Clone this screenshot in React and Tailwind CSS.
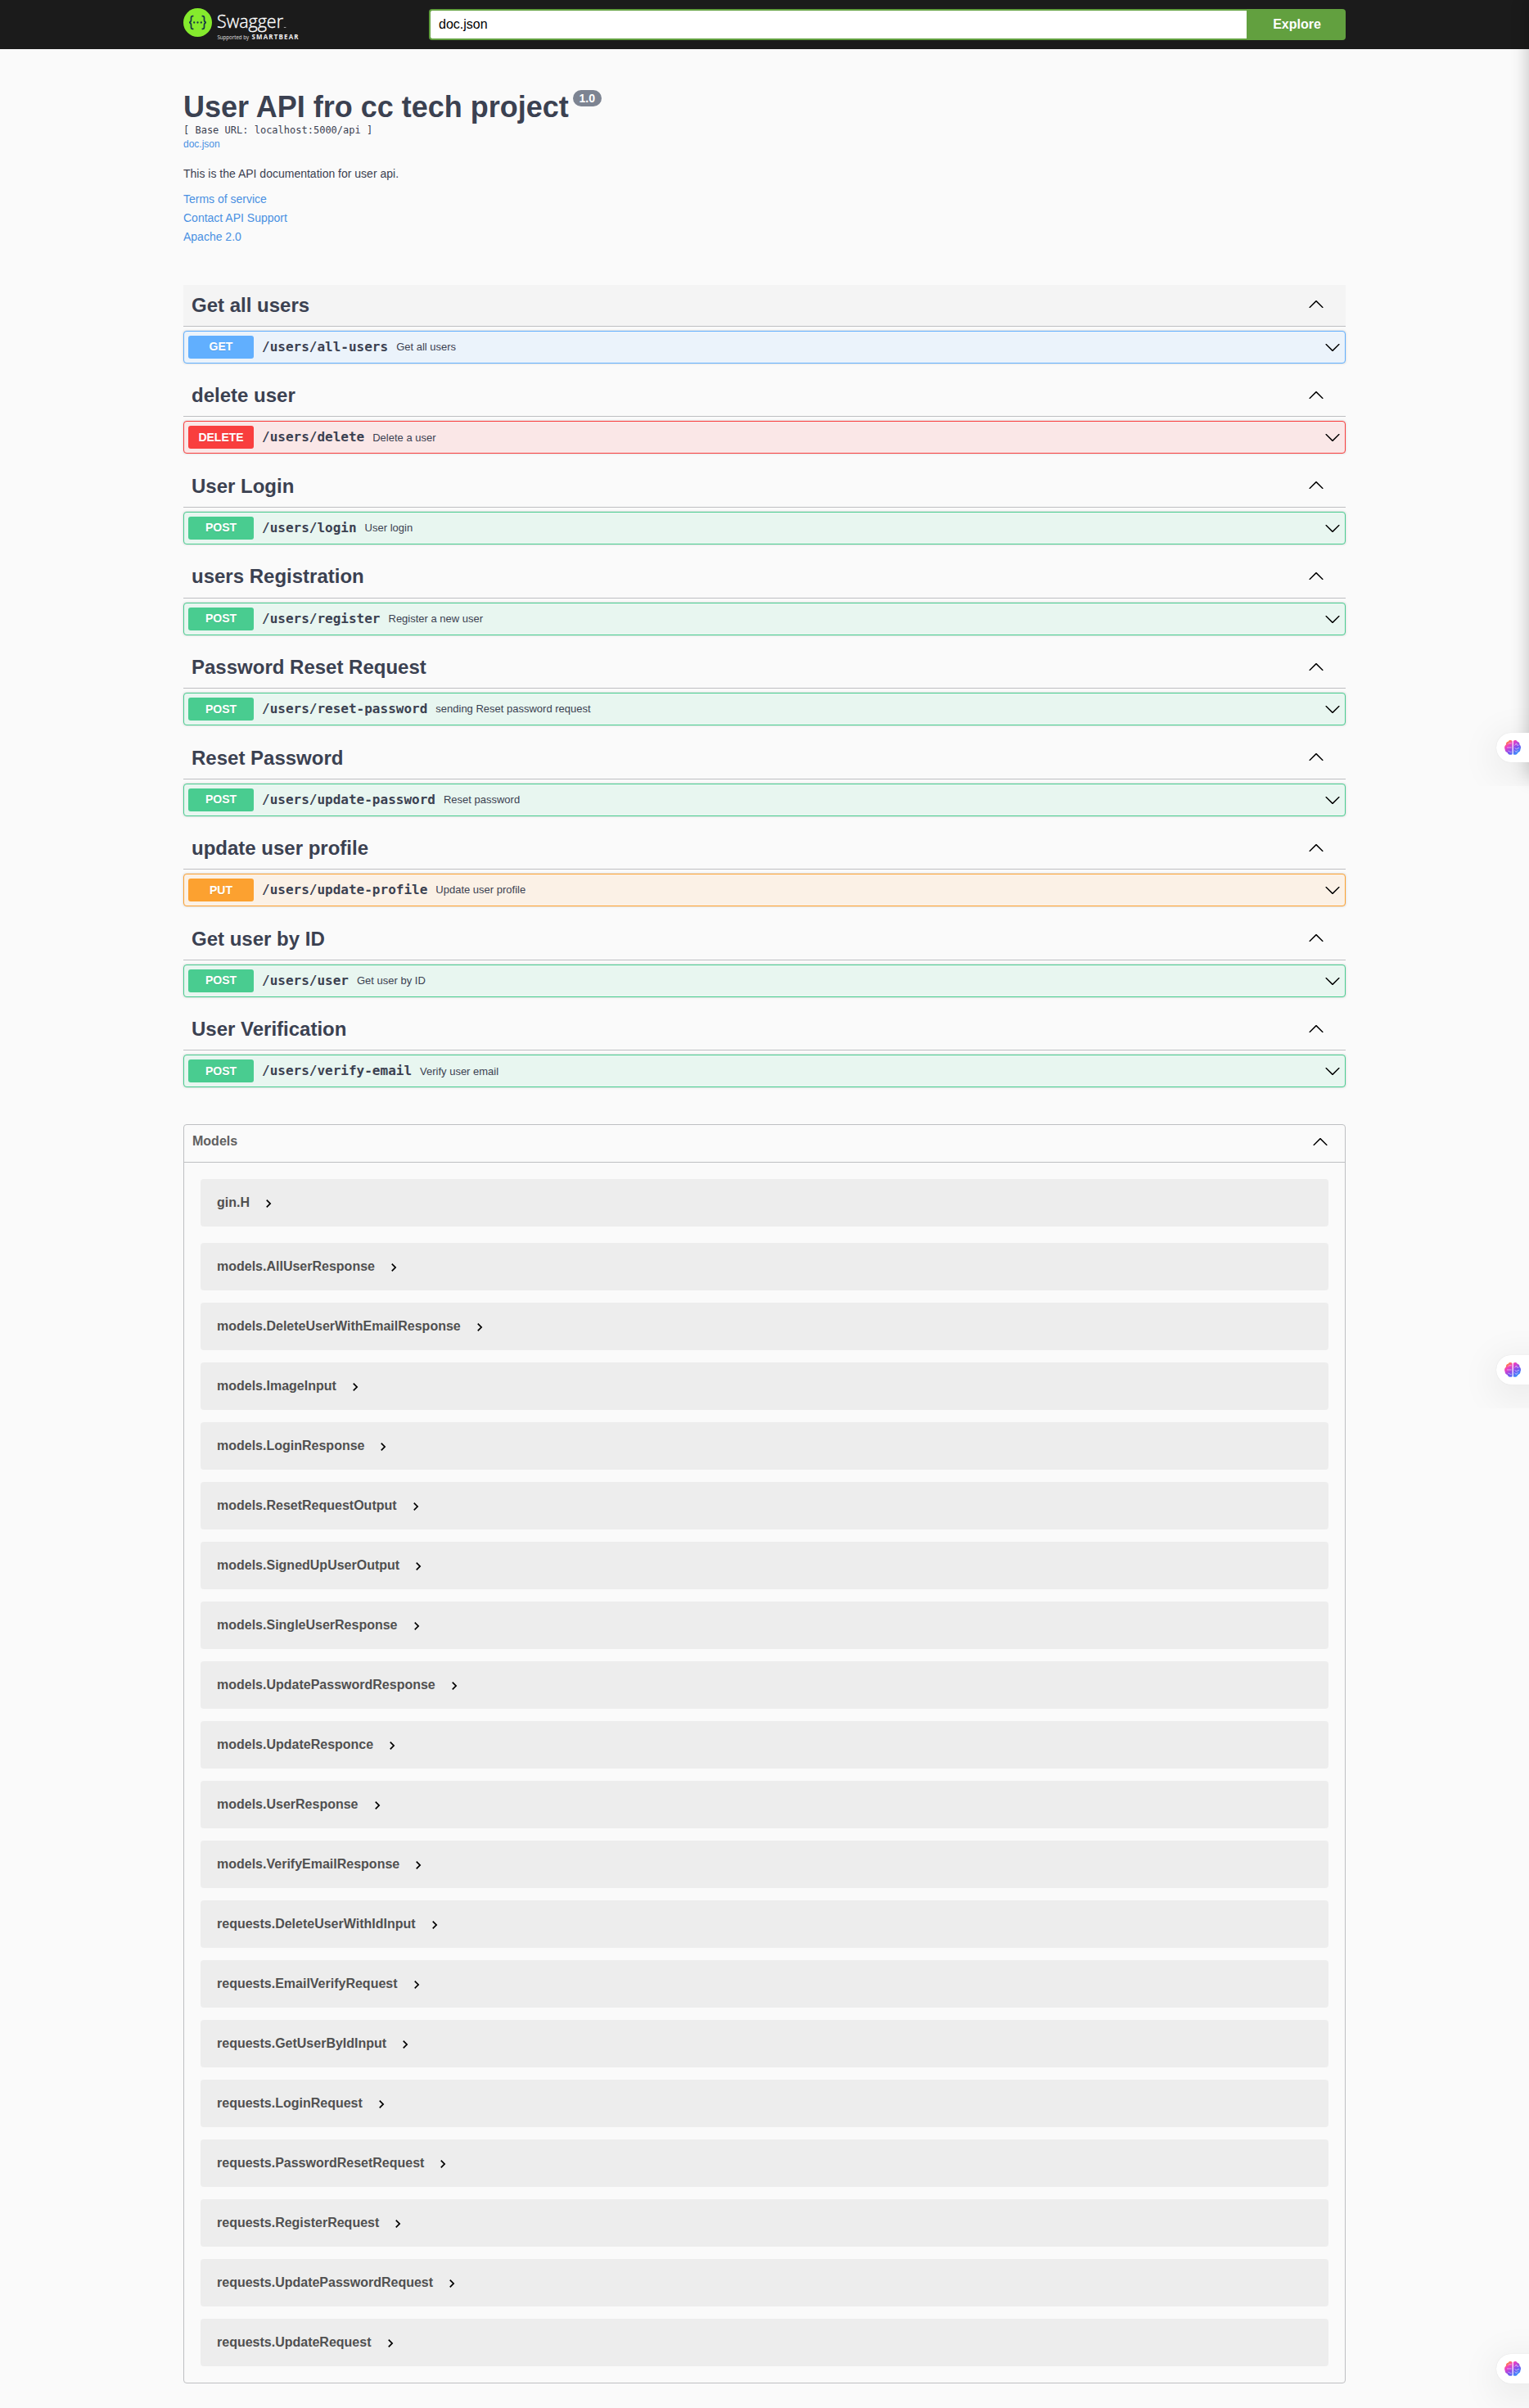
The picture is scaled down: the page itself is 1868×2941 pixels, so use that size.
import React from "react";

const METHODS = {
  GET: { badge: "bg-[#61affe]", row: "border-[#61affe] bg-[#ebf3fb]" },
  DELETE: { badge: "bg-[#f93e3e]", row: "border-[#f93e3e] bg-[#fae7e7]" },
  POST: { badge: "bg-[#49cc90]", row: "border-[#49cc90] bg-[#e8f6f0]" },
  PUT: { badge: "bg-[#fca130]", row: "border-[#fca130] bg-[#fbf1e6]" },
};

const SECTIONS = [
  { title: "Get all users", method: "GET", path: "/users/all-users", summary: "Get all users", active: true },
  { title: "delete user", method: "DELETE", path: "/users/delete", summary: "Delete a user" },
  { title: "User Login", method: "POST", path: "/users/login", summary: "User login" },
  { title: "users Registration", method: "POST", path: "/users/register", summary: "Register a new user" },
  { title: "Password Reset Request", method: "POST", path: "/users/reset-password", summary: "sending Reset password request" },
  { title: "Reset Password", method: "POST", path: "/users/update-password", summary: "Reset password" },
  { title: "update user profile", method: "PUT", path: "/users/update-profile", summary: "Update user profile" },
  { title: "Get user by ID", method: "POST", path: "/users/user", summary: "Get user by ID" },
  { title: "User Verification", method: "POST", path: "/users/verify-email", summary: "Verify user email" },
];

const MODELS = [
  "gin.H",
  "models.AllUserResponse",
  "models.DeleteUserWithEmailResponse",
  "models.ImageInput",
  "models.LoginResponse",
  "models.ResetRequestOutput",
  "models.SignedUpUserOutput",
  "models.SingleUserResponse",
  "models.UpdatePasswordResponse",
  "models.UpdateResponce",
  "models.UserResponse",
  "models.VerifyEmailResponse",
  "requests.DeleteUserWithIdInput",
  "requests.EmailVerifyRequest",
  "requests.GetUserByIdInput",
  "requests.LoginRequest",
  "requests.PasswordResetRequest",
  "requests.RegisterRequest",
  "requests.UpdatePasswordRequest",
  "requests.UpdateRequest",
];

const MONO = "font-['DejaVu_Sans_Mono',monospace]";

function ArrowUp({ className = "" }) {
  return (
    <svg className={`size-5 shrink-0 ${className}`} viewBox="0 0 20 20" fill="black">
      <path d="M17.418 14.908c.272.268.709.268.979 0s.271-.701 0-.969l-7.908-7.83c-.27-.268-.707-.268-.979 0l-7.908 7.83c-.27.268-.27.701 0 .969.271.268.709.268.979 0L10 7.767l7.418 7.141z" />
    </svg>
  );
}

function ArrowDown() {
  return (
    <svg className="size-5 shrink-0" viewBox="0 0 20 20" fill="black">
      <path d="M17.418 6.109c.272-.268.709-.268.979 0s.271.701 0 .969l-7.908 7.83c-.27.268-.707.268-.979 0l-7.908-7.83c-.27-.268-.27-.701 0-.969.271-.268.709-.268.979 0L10 13.25l7.418-7.141z" />
    </svg>
  );
}

function Chevron() {
  return (
    <svg className="ml-[13px] mt-0.5 size-5 shrink-0" viewBox="0 0 24 24" fill="black">
      <path d="M10 6L8.59 7.41 13.17 12l-4.58 4.59L10 18l6-6z" />
    </svg>
  );
}

function Logo() {
  return (
    <div className="flex w-[300px] items-start pt-2.5">
      <svg className="size-[35px] shrink-0" viewBox="0 0 35 35">
        <circle cx="17.5" cy="17.5" r="17.5" fill="#85ea2d" />
        <g fill="none" stroke="#173647" strokeWidth="1.7">
          <path d="M12.4 9.6h-.9c-1.5 0-2 .8-2 2.1v2.9c0 1.7-.6 2.5-2.3 2.9 1.7.4 2.3 1.2 2.3 2.9v2.9c0 1.3.5 2.1 2 2.1h.9" />
          <path d="M22.6 9.6h.9c1.5 0 2 .8 2 2.1v2.9c0 1.7.6 2.5 2.3 2.9-1.7.4-2.3 1.2-2.3 2.9v2.9c0 1.3-.5 2.1-2 2.1h-.9" />
        </g>
        <g fill="#173647">
          <circle cx="13.2" cy="17.5" r="1.15" />
          <circle cx="17.5" cy="17.5" r="1.15" />
          <circle cx="21.8" cy="17.5" r="1.15" />
        </g>
      </svg>
      <svg className="h-[45px] w-[110px] shrink-0" viewBox="0 0 110 45" fill="white" fontFamily="Open Sans, sans-serif">
        <text x="6" y="24" fontSize="21.5" fontWeight="300" textLength="81" lengthAdjust="spacingAndGlyphs" stroke="white" strokeWidth="0.35">Swagger</text>
        <rect x="87.8" y="23" width="2.6" height="0.8" opacity="0.7" />
        <text x="6.5" y="37.6" fontSize="6.3" textLength="38.5" lengthAdjust="spacingAndGlyphs" opacity="0.85">Supported by</text>
        <text x="48.5" y="38" fontSize="7.9" fontWeight="700" textLength="57" opacity="0.92">SMARTBEAR</text>
      </svg>
    </div>
  );
}

function TopBar() {
  return (
    <header className="h-[60px] bg-[#1b1b1b]">
      <div className="mx-auto flex w-[1420px]">
        <Logo />
        <div className="mt-[11px] flex h-[38px] flex-1">
          <div className="flex flex-1 items-center rounded-l border-2 border-r-0 border-[#62a03f] bg-white px-2.5 text-base text-black">
            doc.json
          </div>
          <button className="w-[121px] rounded-r bg-[#62a03f] pl-0.5 text-base font-bold text-white">Explore</button>
        </div>
      </div>
    </header>
  );
}

function Info() {
  return (
    <div className="mt-[50px] h-[238px]">
      <div className="flex items-start">
        <h1 className="text-[36px] font-bold leading-[41px] text-[#3b4151]">User API fro cc tech project</h1>
        <span className="ml-[5px] flex h-5 w-[35px] items-center justify-center rounded-full bg-[#7d8492] text-sm font-bold text-white">1.0</span>
      </div>
      <div className={`mt-px text-[12px] leading-[14px] ${MONO}`}>[ Base URL: localhost:5000/api ]</div>
      <div className="mt-[3px] text-[12px] leading-[14px] text-[#4990e2]">doc.json</div>
      <p className="mt-[19px] text-[14px] leading-[20px]">This is the API documentation for user api.</p>
      <div className="mt-2.5 flex flex-col text-[14px] leading-[23px] text-[#4990e2]">
        <a>Terms of service</a>
        <a>Contact API Support</a>
        <a>Apache 2.0</a>
      </div>
    </div>
  );
}

function Section({ section }) {
  const m = METHODS[section.method];
  return (
    <section className="mb-[15px]">
      <div
        className={`mb-[5px] flex h-[50.55px] items-center justify-between border-b border-[#bebfc2] pb-[0.6px] pl-2.5 pr-[26px] ${
          section.active ? "bg-black/[0.025]" : ""
        }`}
      >
        <h3 className="text-[24px] font-bold leading-[28px]">{section.title}</h3>
        <ArrowUp className="mb-[3px]" />
      </div>
      <div className={`flex h-10 items-center rounded border pl-[5px] pr-[5px] shadow-[0_0_3px_rgba(0,0,0,0.19)] ${m.row}`}>
        <span className={`flex h-7 w-20 items-center justify-center rounded-[3px] text-[14px] font-bold text-white [text-shadow:0_1px_0_rgba(0,0,0,0.1)] ${m.badge}`}>
          {section.method}
        </span>
        <span className={`px-2.5 text-[16px] font-bold ${MONO}`}>{section.path}</span>
        <span className="flex-1 text-[13px]">{section.summary}</span>
        <ArrowDown />
      </div>
    </section>
  );
}

function Models() {
  return (
    <section className="mt-[45px] h-[1538px] rounded border border-[#bebfc2]">
      <div className="flex h-[46px] items-center justify-between border-b border-[#bebfc2] pl-2.5 pr-5">
        <h4 className="pb-[5px] text-[16px] font-bold leading-[18px] text-[#606060]">Models</h4>
        <ArrowUp className="mb-[5px]" />
      </div>
      <div className="px-5 pt-5">
        {MODELS.map((name, i) => (
          <div key={name} className={`flex h-[58px] items-center rounded bg-[#ededed] pl-5 ${i === 0 ? "mb-5" : "mb-[15px]"}`}>
            <span className="text-[16px] font-bold leading-[18px] text-[#505050]">{name}</span>
            <Chevron />
          </div>
        ))}
      </div>
    </section>
  );
}

function Brain({ id }) {
  return (
    <svg className="h-[18px] w-5" viewBox="0 0 20 18">
      <defs>
        <linearGradient id={id} x1="0.1" y1="0" x2="0.9" y2="1">
          <stop offset="0.05" stopColor="#ff9a1f" />
          <stop offset="0.28" stopColor="#f23fc0" />
          <stop offset="0.6" stopColor="#7d50f0" />
          <stop offset="1" stopColor="#1ea7ff" />
        </linearGradient>
      </defs>
      <path
        fill={`url(#${id})`}
        d="M9.7 1.2C8.3-.5 5.3-.2 4.6 1.7 2.6 2 1.5 3.8 2 5.6.2 6.7-.4 9.3.6 11 .5 13 1.7 14.6 3.5 15 4.6 18 8.1 18.6 9.7 17V1.2ZM10.7 1.2C12.1-.5 15-.2 15.8 1.7c1.9.3 3 2 2.6 3.9 1.7 1.1 2.1 3.8 1.1 5.4.1 2-1.2 3.6-2.9 4-1.1 3-4.5 3.6-5.9 2V1.2Z"
      />
      <g fill="none" stroke="white" strokeWidth="0.8" opacity="0.65">
        <path d="M10.2 1v16M3 9h5.5M4.5 4.8c1.3-1.5 2.5-1 4-1M4.5 13.2c1.5.2 2 1.5 4 1.2M12.5 6.5l2-2.5 1 2.2h2M12.5 9.5l2 1.3 3.5-1.5M12.5 12.5l1.5 2 2.5-2" />
      </g>
    </svg>
  );
}

function AssistantTab({ id, className }) {
  return (
    <div className={`absolute right-0 w-[100px] overflow-hidden ${className}`}>
      <div className="ml-[60px] mt-[60px] flex h-9 w-[60px] items-center rounded-l-full bg-white pl-2.5 shadow-[0_10px_50px_rgba(0,0,0,0.11),0_0_1px_rgba(0,0,0,0.15)]">
        <Brain id={id} />
      </div>
    </div>
  );
}

export default function App() {
  return (
    <div className="relative h-[2941px] w-full overflow-hidden bg-[#fafafa] font-['Liberation_Sans',Arial,sans-serif] text-[#3b4151]">
      <TopBar />
      <main className="mx-auto w-[1420px]">
        <Info />
        <div className="pt-[0.35px]">
          {SECTIONS.map((s) => (
            <Section key={s.title} section={s} />
          ))}
        </div>
        <Models />
      </main>
      <div className="absolute left-full top-0 h-[950px] w-10 shadow-[0_0_22px_rgba(0,0,0,0.24)]" />
      <AssistantTab id="tab-one" className="top-[835px] h-[125px]" />
      <AssistantTab id="tab-two" className="top-[1595px] h-[125px]" />
      <AssistantTab id="tab-three" className="top-[2815px] h-[126px]" />
    </div>
  );
}
